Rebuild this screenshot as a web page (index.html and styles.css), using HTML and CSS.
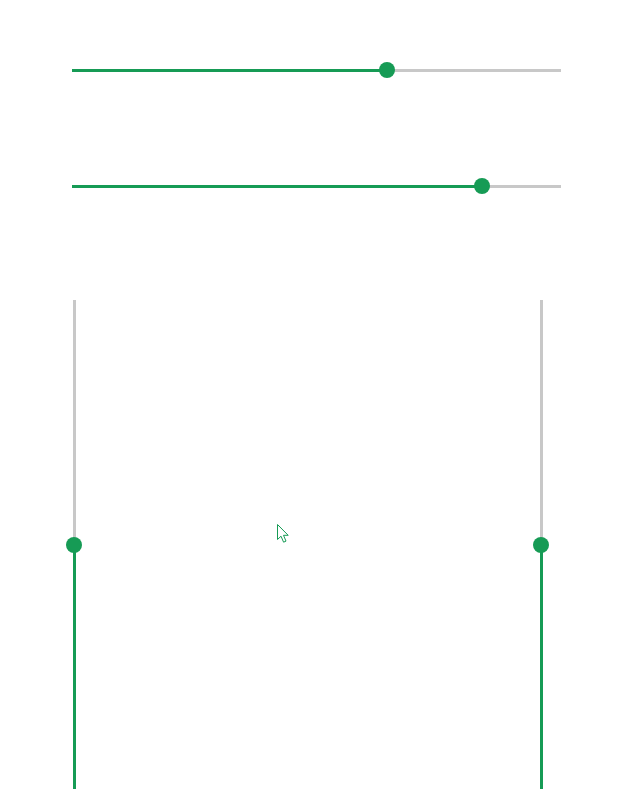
FILE: index.html
```html
<!DOCTYPE html>
<html>
<head>
<meta charset="utf-8">
<link rel="stylesheet" href="styles.css">
</head>
<body>
<main class="page">
  <div class="hslider hs1">
    <div class="track"></div>
    <div class="fill" style="width:64.4%"></div>
    <div class="thumb" style="left:64.4%"></div>
  </div>
  <div class="hslider hs2">
    <div class="track"></div>
    <div class="fill" style="width:83.8%"></div>
    <div class="thumb" style="left:83.8%"></div>
  </div>
  <div class="vrow">
    <div class="vslider">
      <div class="vtrack"></div>
      <div class="vfill" style="height:50%"></div>
      <div class="vthumb" style="bottom:50%"></div>
    </div>
    <div class="vslider">
      <div class="vtrack"></div>
      <div class="vfill" style="height:50%"></div>
      <div class="vthumb" style="bottom:50%"></div>
    </div>
    <svg class="cursor" width="14" height="22" viewBox="0 0 14 22">
      <path d="M1.5 1.5 L1.5 16.5 L5 13.2 L7.6 19.2 L10 18.1 L7.5 12.3 L12.2 12.3 Z" fill="#fff" stroke="#169b55" stroke-width="1" stroke-linejoin="miter"/>
    </svg>
  </div>
</main>
</body>
</html>
```

FILE: styles.css
```css
html, body {
  margin: 0;
  padding: 0;
  background: #fff;
  font-family: "Liberation Sans", Arial, sans-serif;
}
.page {
  width: 623px;
  height: 805px;
  display: flex;
  flex-direction: column;
  overflow: hidden;
}
.hslider {
  position: relative;
  margin-left: 72px;
  width: 489px;
  height: 16px;
}
.hs1 { margin-top: 62px; }
.hs2 { margin-top: 100px; }
.track {
  position: absolute;
  left: 0;
  right: 0;
  top: 6.5px;
  height: 3px;
  background: #c8c8c8;
}
.fill {
  position: absolute;
  left: 0;
  top: 6.5px;
  height: 3px;
  background: #169b55;
}
.thumb {
  position: absolute;
  top: 0;
  width: 16px;
  height: 16px;
  margin-left: -8px;
  border-radius: 50%;
  background: #169b55;
}
.vrow {
  position: relative;
  margin-top: 106px;
  margin-left: 66px;
  width: 483px;
  height: 489px;
  display: flex;
  justify-content: space-between;
}
.vslider {
  position: relative;
  width: 16px;
  height: 489px;
}
.vtrack {
  position: absolute;
  top: 0;
  bottom: 0;
  left: 6.5px;
  width: 3px;
  background: #c8c8c8;
}
.vfill {
  position: absolute;
  bottom: 0;
  left: 6.5px;
  width: 3px;
  background: #169b55;
}
.vthumb {
  position: absolute;
  left: 0;
  width: 16px;
  height: 16px;
  margin-bottom: -8px;
  border-radius: 50%;
  background: #169b55;
}
.cursor {
  position: absolute;
  left: 210px;
  top: 223px;
}
```
